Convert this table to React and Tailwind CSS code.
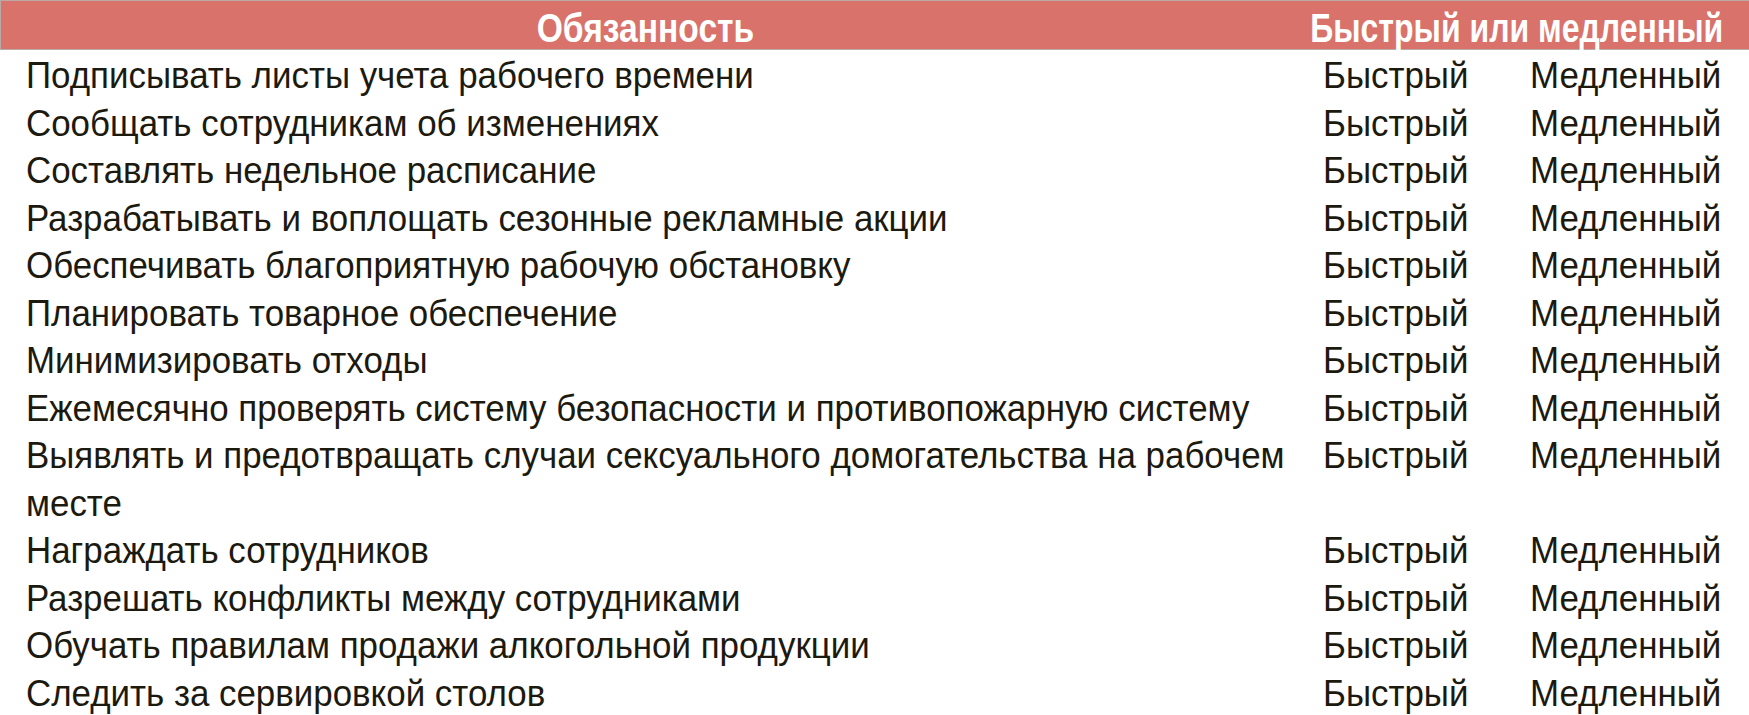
const duties = [
  "Подписывать листы учета рабочего времени",
  "Сообщать сотрудникам об изменениях",
  "Составлять недельное расписание",
  "Разрабатывать и воплощать сезонные рекламные акции",
  "Обеспечивать благоприятную рабочую обстановку",
  "Планировать товарное обеспечение",
  "Минимизировать отходы",
  "Ежемесячно проверять систему безопасности и противопожарную систему",
  "Выявлять и предотвращать случаи сексуального домогательства на рабочем месте",
  "Награждать сотрудников",
  "Разрешать конфликты между сотрудниками",
  "Обучать правилам продажи алкогольной продукции",
  "Следить за сервировкой столов",
];

export default function App() {
  return (
    <div
      className="w-[1749px] h-[715px] bg-white overflow-hidden text-[#1c1a0e]"
      style={{ fontFamily: '"Liberation Sans", Arial, sans-serif' }}
    >
      {/* HEADER */}
      <div className="h-[50px] bg-[#d9726a] border-t border-l border-b border-[#b9aaa8] flex items-start pt-[7px] text-white font-bold text-[40px] leading-none">
        <div className="w-[1288px] shrink-0 text-center">
          <span className="inline-block scale-x-[0.84]">Обязанность</span>
        </div>
        <div className="flex-1 min-w-0 flex justify-end pr-[26px]">
          <span className="shrink-0 whitespace-nowrap origin-right scale-x-[0.80]">
            Быстрый или медленный
          </span>
        </div>
      </div>

      {/* ROWS (condensed face) */}
      <div className="pt-[2px] text-[37px] leading-[47.5px]">
        {duties.map((d) => (
          <div key={d} className="grid grid-cols-[1323px_207px_1fr]">
            <div className="pl-[26px] min-w-0">
              <div className="w-[1340px] origin-left scale-x-[0.943]">{d}</div>
            </div>
            <div>
              <span className="inline-block origin-left scale-x-[0.943]">Быстрый</span>
            </div>
            <div>
              <span className="inline-block origin-left scale-x-[0.943]">Медленный</span>
            </div>
          </div>
        ))}
      </div>
    </div>
  );
}
